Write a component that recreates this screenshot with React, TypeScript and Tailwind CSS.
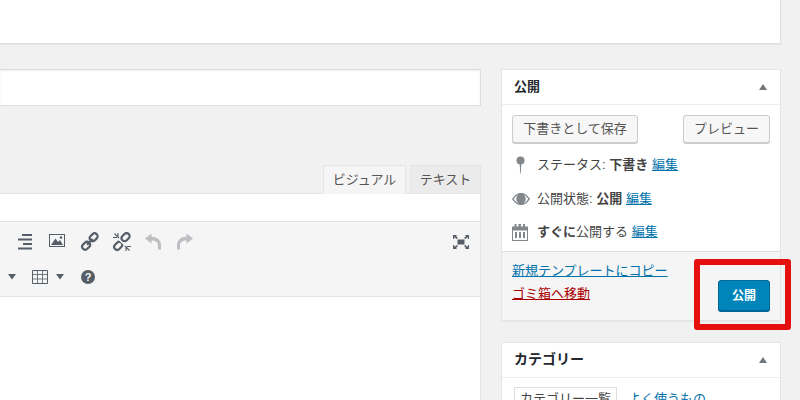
import React from "react";

const font = { fontFamily: '"Liberation Sans", "Noto Sans CJK JP", sans-serif' };

function Caret({ c = "#72777c" }: { c?: string }) {
  return (
    <svg width="8" height="6" viewBox="0 0 8 6" fill={c}>
      <path d="M0 6 L4 0 L8 6 Z" />
    </svg>
  );
}

function Down() {
  return (
    <svg width="8" height="6" viewBox="0 0 8 6" fill="#555d66">
      <path d="M0 0 H8 L4 5.5 Z" />
    </svg>
  );
}

export default function App() {
  return (
    <div style={font} className="relative w-[800px] h-[400px] overflow-hidden bg-[#f1f1f1] text-[#444]">
      <div className="h-[44px] w-[781px] bg-white border-b border-r border-[#e0e0e0] shadow-[0_1px_1px_rgba(0,0,0,0.04)]" />
      <div className="flex mt-[25px] items-start">
        {/* left column */}
        <div className="w-[481px] shrink-0">
          <div className="h-[37px] bg-white border border-l-0 border-[#ddd] shadow-[inset_0_1px_2px_rgba(0,0,0,0.07)]" />
          <div className="flex justify-end items-end h-[87px]">
            <div className="h-[29px] w-[83px] mr-[4px] -mb-px z-10 bg-[#f5f5f5] border border-b-0 border-[#e5e5e5] flex items-center justify-center text-[13px] text-[#555]">ビジュアル</div>
            <div className="h-[28px] w-[71px] bg-[#ebebeb] border border-b-0 border-[#e5e5e5] flex items-center justify-center text-[13px] text-[#555]">テキスト</div>
          </div>
          <div className="bg-white border-t border-r border-[#e5e5e5] h-[300px]">
            <div className="h-[27px]" />
            <div className="h-[76px] bg-[#f5f5f5] border-y border-[#e2e2e2]">
              <div className="flex items-center h-[39px] pl-[16px] pr-[11px]">
                <div className="flex items-center gap-[12px]">
                  {/* align right */}
                  <svg width="20" height="20" viewBox="0 0 20 20" fill="#555d66">
                    <path d="M6 2h10v2H6zM2 6.5h14v2H2zM7 11h9v2H7zM2 15.5h14v2H2z" />
                  </svg>
                  {/* image */}
                  <svg width="20" height="20" viewBox="0 0 20 20" fill="#555d66">
                    <path fillRule="evenodd" d="M1 2h16v13H1zM2 3v11h14V3z" />
                    <path d="M3 13 L7.5 6.5 L10 10 L12 8 L15 13 Z" />
                    <circle cx="13" cy="5.5" r="1.3" />
                  </svg>
                  {/* link */}
                  <svg width="20" height="20" viewBox="0 0 20 20" fill="none" stroke="#555d66" strokeWidth="2.2">
                    <rect x="9.4" y="2.2" width="8.6" height="6" rx="3" transform="rotate(-45 13.7 5.2)" />
                    <rect x="1.8" y="10.8" width="8.6" height="6" rx="3" transform="rotate(-45 6.1 13.8)" />
                    <path d="M7 12.8 L12.8 7" />
                  </svg>
                  {/* unlink */}
                  <svg width="20" height="20" viewBox="0 0 20 20" fill="none" stroke="#555d66" strokeWidth="2.2">
                    <rect x="9.2" y="2.2" width="8.8" height="6" rx="3" transform="rotate(-45 13.6 5.2)" />
                    <rect x="1.8" y="10.8" width="8.8" height="6" rx="3" transform="rotate(-45 6.2 13.8)" />
                    <path strokeWidth="1.2" stroke="#f5f5f5" d="M7 7.5 L12.5 13" />
                    <path strokeWidth="1.1" d="M2.5 1.5 L7 6 M1 5.5 H5 M6 1 V4.5 M17.5 18.5 L13 14 M19 14.5 H15 M14 19 V15.5" />
                  </svg>
                  {/* undo */}
                  <svg width="20" height="20" viewBox="0 0 20 20" fill="#bdbfc2">
                    <path d="M1 6.5 L7.5 1.5 V4.8 C13 4.8 17 8 17 13 V17.5 H14 V13.5 C14 10.2 11.5 8.6 7.5 8.6 V11.5 Z" />
                  </svg>
                  {/* redo */}
                  <svg width="20" height="20" viewBox="0 0 20 20" fill="#bdbfc2">
                    <path d="M17 6.5 L10.5 1.5 V4.8 C5 4.8 1 8 1 13 V17.5 H4 V13.5 C4 10.2 6.5 8.6 10.5 8.6 V11.5 Z" />
                  </svg>
                </div>
                <div className="ml-auto">
                  <svg width="16" height="14" viewBox="0 0 16 14" fill="#555d66">
                    <path d="M4.5 4.5h7v5h-7z" />
                    <path d="M0 0 H4 L3 1 L5 3 L3.5 4 L1.5 2 L1 4 H0 Z" />
                    <path d="M16 0 H12 L13 1 L11 3 L12.5 4 L14.5 2 L15 4 H16 Z" />
                    <path d="M0 14 H4 L3 13 L5 11 L3.5 10 L1.5 12 L1 10 H0 Z" />
                    <path d="M16 14 H12 L13 13 L11 11 L12.5 10 L14.5 12 L15 10 H16 Z" />
                  </svg>
                </div>
              </div>
              <div className="flex items-center h-[32px] pl-[8px]">
                <Down />
                <div className="ml-[16px] flex">
                  <svg width="16" height="14" viewBox="0 0 16 14" fill="none" stroke="#555d66">
                    <path d="M.5.5h15v13H.5z" />
                    <path d="M.5 4.5h15M.5 9h15M5.5.5v13M10.5.5v13" strokeWidth="0.8" />
                  </svg>
                </div>
                <div className="ml-[8px] flex"><Down /></div>
                <div className="ml-[17px] flex">
                  <svg width="14" height="14" viewBox="0 0 14 14">
                    <circle cx="7" cy="7" r="7" fill="#555d66" />
                    <text x="7" y="10.8" textAnchor="middle" fontSize="11" fontWeight="700" fill="#f5f5f5" fontFamily="Liberation Sans">?</text>
                  </svg>
                </div>
              </div>
            </div>
          </div>
        </div>

        {/* right column */}
        <div className="ml-[20px] w-[280px] shrink-0">
          <div className="bg-white border border-[#e5e5e5] shadow-[0_1px_1px_rgba(0,0,0,0.04)]">
            <div className="h-[35px] border-b border-[#eee] flex items-center justify-between pl-[12px] pr-[13px]">
              <span className="text-[13px] font-bold text-[#23282d]">公開</span>
              <Caret />
            </div>
            <div className="pt-[10px] px-[10px] h-[146px]">
              <div className="flex justify-between">
                <div className="h-[28px] w-[126px] rounded-[3px] border border-[#ccc] bg-[#f7f7f7] shadow-[0_1px_0_#ccc] flex items-center justify-center text-[13px] text-[#555]">下書きとして保存</div>
                <div className="h-[28px] w-[87px] rounded-[3px] border border-[#ccc] bg-[#f7f7f7] shadow-[0_1px_0_#ccc] flex items-center justify-center text-[13px] text-[#555]">プレビュー</div>
              </div>
              <div className="flex items-center h-[20px] mt-[12px] text-[13px]">
                <div className="w-[25px] pl-[4px] flex">
                  <svg width="10" height="18" viewBox="0 0 10 18" fill="#82878c"><circle cx="4.5" cy="4.5" r="4" /><path d="M3.7 8h1.6L4.8 17.5h-.6z" /></svg>
                </div>
                <span>ステータス: <b>下書き</b> <a className="text-[#0073aa] underline">編集</a></span>
              </div>
              <div className="flex items-center h-[20px] mt-[14px] text-[13px]">
                <div className="w-[25px] flex">
                  <svg width="18" height="12" viewBox="0 0 18 12" fill="#82878c">
                    <path fillRule="evenodd" d="M0 6 C3 1.5 6 0 9 0 C12 0 15 1.5 18 6 C15 10.5 12 12 9 12 C6 12 3 10.5 0 6 Z M1.8 6 C3 8 5 9.8 6.5 10.4 C5 9 4.3 7.8 4.3 6 C4.3 4.2 5 3 6.5 1.6 C5 2.2 3 4 1.8 6 Z M16.2 6 C15 4 13 2.2 11.5 1.6 C13 3 13.7 4.2 13.7 6 C13.7 7.8 13 9 11.5 10.4 C13 9.8 15 8 16.2 6 Z" />
                    <circle cx="9" cy="5.5" r="3.6" />
                  </svg>
                </div>
                <span>公開状態: <b>公開</b> <a className="text-[#0073aa] underline">編集</a></span>
              </div>
              <div className="flex items-center h-[20px] mt-[13px] text-[13px]">
                <div className="w-[25px] flex">
                  <svg width="16" height="17" viewBox="0 0 16 17" fill="#82878c">
                    <path fillRule="evenodd" d="M0 2.5h2.5V0h2v2.5h2V0h2.5v2.5h2V0h2v2.5H16V17H0zM1 6.5V16h14V6.5z" />
                    <path d="M3 8h2v6H3zM7 8h2v6H7zM11 8h2v6h-2z" />
                  </svg>
                </div>
                <span><b>すぐに</b>公開する <a className="text-[#0073aa] underline">編集</a></span>
              </div>
            </div>
            <div className="h-[69px] bg-[#f5f5f5] border-t border-[#ddd] relative pl-[10px] pt-[9px] text-[13px]">
              <a className="block text-[#0073aa] underline leading-[20px]">新規テンプレートにコピー</a>
              <a className="block text-[#a00] underline leading-[20px] mt-[3px]">ゴミ箱へ移動</a>
              <div className="absolute left-[216px] top-[28px] w-[52px] h-[31px] rounded-[3px] bg-[#0085ba] border border-[#006799] shadow-[0_1px_0_#006799] flex items-center justify-center text-[12px] font-bold text-white">公開</div>
            </div>
          </div>
          <div className="mt-[21px] bg-white border border-[#e5e5e5]">
            <div className="h-[35px] border-b border-[#eee] flex items-center justify-between pl-[12px] pr-[13px]">
              <span className="text-[14px] font-bold text-[#23282d] -mt-[1px]">カテゴリー</span>
              <Caret />
            </div>
            <div className="flex pl-[12px] pt-[9px] text-[13px]">
              <div className="h-[30px] w-[103px] border border-[#ddd] border-b-0 flex justify-center pt-[1px] text-[#444]">カテゴリー一覧</div>
              <a className="ml-[11px] pt-[2px] text-[#0073aa]">よく使うもの</a>
            </div>
          </div>
        </div>
      </div>

      <div className="absolute left-[694px] top-[259px] w-[97px] h-[71px] rounded-[3px] border-[6px] border-[#e60f0f]" />
    </div>
  );
}
